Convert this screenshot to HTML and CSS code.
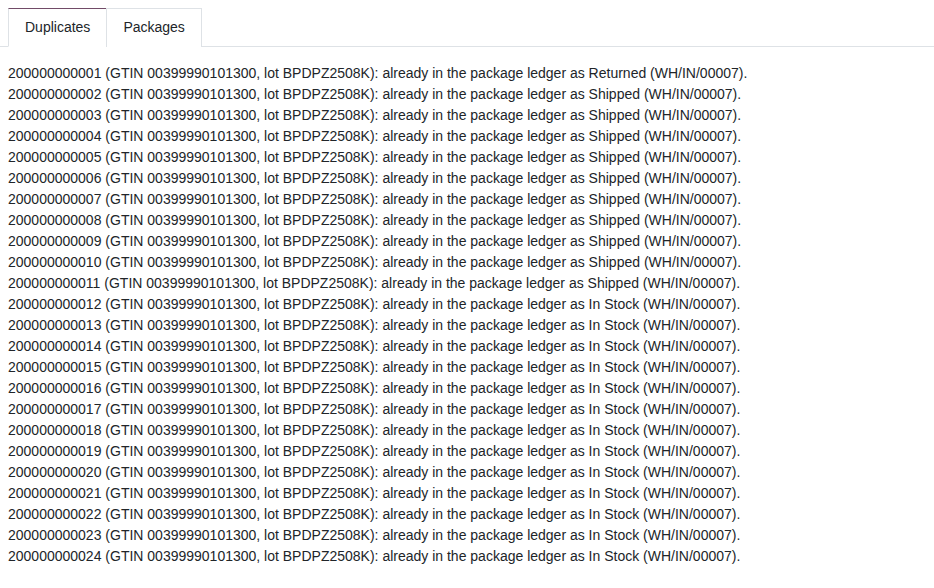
FILE: index.html
```html
<!DOCTYPE html>
<html>
<head>
    <meta charset="utf-8" />
    <title>Duplicates</title>
    <link rel="stylesheet" href="styles.css">
</head>
<body>
    <ul class="tabs">
        <li class="tab active">Duplicates</li>
        <li class="tab">Packages</li>
    </ul>
    <div class="pane">
        <div>200000000001 (GTIN 00399990101300, lot BPDPZ2508K): already in the package ledger as Returned (WH/IN/00007).</div>
        <div>200000000002 (GTIN 00399990101300, lot BPDPZ2508K): already in the package ledger as Shipped (WH/IN/00007).</div>
        <div>200000000003 (GTIN 00399990101300, lot BPDPZ2508K): already in the package ledger as Shipped (WH/IN/00007).</div>
        <div>200000000004 (GTIN 00399990101300, lot BPDPZ2508K): already in the package ledger as Shipped (WH/IN/00007).</div>
        <div>200000000005 (GTIN 00399990101300, lot BPDPZ2508K): already in the package ledger as Shipped (WH/IN/00007).</div>
        <div>200000000006 (GTIN 00399990101300, lot BPDPZ2508K): already in the package ledger as Shipped (WH/IN/00007).</div>
        <div>200000000007 (GTIN 00399990101300, lot BPDPZ2508K): already in the package ledger as Shipped (WH/IN/00007).</div>
        <div>200000000008 (GTIN 00399990101300, lot BPDPZ2508K): already in the package ledger as Shipped (WH/IN/00007).</div>
        <div>200000000009 (GTIN 00399990101300, lot BPDPZ2508K): already in the package ledger as Shipped (WH/IN/00007).</div>
        <div>200000000010 (GTIN 00399990101300, lot BPDPZ2508K): already in the package ledger as Shipped (WH/IN/00007).</div>
        <div>200000000011 (GTIN 00399990101300, lot BPDPZ2508K): already in the package ledger as Shipped (WH/IN/00007).</div>
        <div>200000000012 (GTIN 00399990101300, lot BPDPZ2508K): already in the package ledger as In Stock (WH/IN/00007).</div>
        <div>200000000013 (GTIN 00399990101300, lot BPDPZ2508K): already in the package ledger as In Stock (WH/IN/00007).</div>
        <div>200000000014 (GTIN 00399990101300, lot BPDPZ2508K): already in the package ledger as In Stock (WH/IN/00007).</div>
        <div>200000000015 (GTIN 00399990101300, lot BPDPZ2508K): already in the package ledger as In Stock (WH/IN/00007).</div>
        <div>200000000016 (GTIN 00399990101300, lot BPDPZ2508K): already in the package ledger as In Stock (WH/IN/00007).</div>
        <div>200000000017 (GTIN 00399990101300, lot BPDPZ2508K): already in the package ledger as In Stock (WH/IN/00007).</div>
        <div>200000000018 (GTIN 00399990101300, lot BPDPZ2508K): already in the package ledger as In Stock (WH/IN/00007).</div>
        <div>200000000019 (GTIN 00399990101300, lot BPDPZ2508K): already in the package ledger as In Stock (WH/IN/00007).</div>
        <div>200000000020 (GTIN 00399990101300, lot BPDPZ2508K): already in the package ledger as In Stock (WH/IN/00007).</div>
        <div>200000000021 (GTIN 00399990101300, lot BPDPZ2508K): already in the package ledger as In Stock (WH/IN/00007).</div>
        <div>200000000022 (GTIN 00399990101300, lot BPDPZ2508K): already in the package ledger as In Stock (WH/IN/00007).</div>
        <div>200000000023 (GTIN 00399990101300, lot BPDPZ2508K): already in the package ledger as In Stock (WH/IN/00007).</div>
        <div>200000000024 (GTIN 00399990101300, lot BPDPZ2508K): already in the package ledger as In Stock (WH/IN/00007).</div>
    </div>
</body>
</html>
```

FILE: styles.css
```css
* {margin: 0; padding: 0; box-sizing: border-box;}
body {
    font-family: "Liberation Sans", Arial, sans-serif;
    font-size: 14px;
    line-height: 21px;
    color: #212529;
    background: #fff;
}

.tabs {
    display: flex;
    list-style: none;
    margin-top: 8px;
    padding-left: 8px;
    border-bottom: 1px solid #dee2e6;
}

.tab {
    padding: 8px 16px;
    border: 1px solid #dee2e6;
    border-bottom: 0;
    margin-bottom: -1px;
    color: #212529;
    background: #fff;
    height: 39px;
}
.tab.active {
    color: #212529;
    border-top-color: #714b67;
    border-bottom: 1px solid #fff;
}
.tab + .tab {margin-left: -1px;}

.pane {
    padding: 16px 8px;
}
```
